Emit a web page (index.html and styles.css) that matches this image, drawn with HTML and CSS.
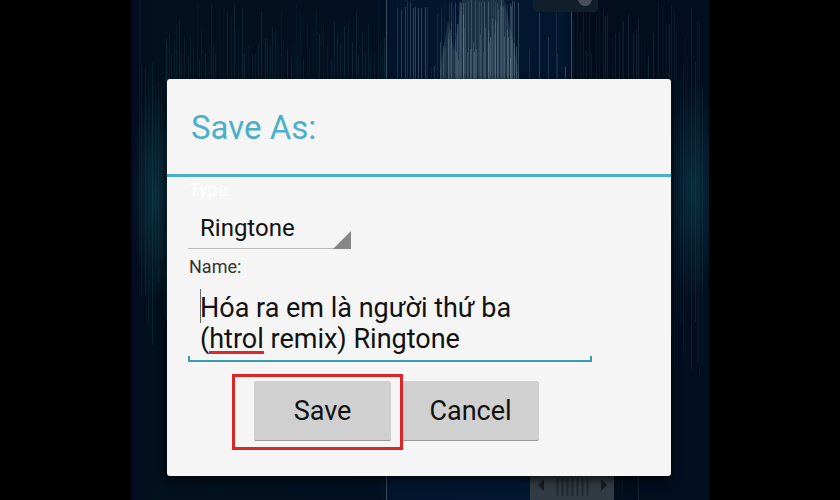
FILE: index.html
```html
<!DOCTYPE html>
<html lang="vi">
<head>
<meta charset="UTF-8">
<meta name="viewport" content="width=device-width, initial-scale=1.0">
<title>Save As</title>
<link rel="stylesheet" href="styles.css">
</head>
<body>
<main class="screen">
  <svg class="waveform" viewBox="0 0 578 500" preserveAspectRatio="none" aria-hidden="true">
    <defs>
      <linearGradient id="base">
        <stop offset="0" stop-color="#020c20"/>
        <stop offset="0.04" stop-color="#03101d"/>
        <stop offset="0.43" stop-color="#031022"/>
        <stop offset="0.45" stop-color="#03152d"/>
        <stop offset="0.75" stop-color="#021630"/>
        <stop offset="0.77" stop-color="#020c1c"/>
        <stop offset="1" stop-color="#020f20"/>
      </linearGradient>
      <radialGradient id="glow">
        <stop offset="0" stop-color="#0b3444" stop-opacity="0.8"/>
        <stop offset="1" stop-color="#0b3444" stop-opacity="0"/>
      </radialGradient>
    </defs>
    <rect width="578" height="500" fill="url(#base)"/>
    <ellipse cx="24" cy="195" rx="24" ry="110" fill="url(#glow)"/>
    <ellipse cx="562" cy="190" rx="28" ry="110" fill="url(#glow)"/>
    <path d="M309 100V70l8-50 6 30 8-50h42l10 45 6 40v15z" fill="#3d5a6a" fill-opacity="0.4"/>
    <g id="bars"></g>
    <path d="M255.500 0V500M440.500 0V500" stroke="#526873" stroke-opacity="0.7"/>
    <path d="M402 0h65v9q0 3-3 3h-59q-3 0-3-3z" fill="#111f2b"/>
    <path d="M447 0h14q-2 6-7 6t-7-6z" fill="#46505a"/>
    <rect x="399" y="476" width="84" height="24" fill="#323a43"/>
    <path d="M413 479v12l-6-6zM470 479v12l6-6z" fill="#171d25"/>
    <path d="M426.500 478v18M431.500 478v18M436.500 478v18M441.500 478v18M446.500 478v18M451.500 478v18M456.500 478v18" stroke="#202832" stroke-width="2"/>
  </svg>

  <form class="dialog">
    <h1 class="title">Save As:</h1>
    <div class="fields">
      <label class="label label-type" for="type">Type:</label>
      <div class="type">
        <select id="type">
          <option>Ringtone</option>
        </select>
      </div>
      <label class="label" for="name">Name:</label>
      <div class="name">
        <textarea id="name" rows="2" spellcheck="false">Hóa ra em là người thứ ba (htrol remix) Ringtone</textarea>
        <span class="caret"></span>
        <span class="misspelled"></span>
      </div>
      <div class="actions">
        <div class="highlight"><button type="button">Save</button></div>
        <button type="button">Cancel</button>
      </div>
    </div>
  </form>
</main>
<script src="script.js"></script>
</body>
</html>
```
FILE: styles.css
```css
* {
  box-sizing: border-box;
}

body {
  margin: 0;
  background: #000;
  color: #111;
  font-family: Roboto, "Liberation Sans", sans-serif;
}

.screen {
  position: relative;
  min-height: 100vh;
  margin: 0 131px;
  padding: 79px 38px 24px 36px;
  overflow: hidden;
}

.waveform {
  position: absolute;
  inset: 0;
  width: 100%;
  height: 100%;
}

.dialog {
  position: relative;
  background: #f5f5f5;
  border-radius: 3px;
  box-shadow: 0 3px 10px rgba(0, 0, 0, 0.8);
}

.title {
  margin: 0;
  padding: 29px 24px 26px;
  border-bottom: 3px solid #4bafca;
  color: #4bafca;
  font-size: 33px;
  font-weight: 400;
  line-height: 40px;
}

.fields {
  display: flex;
  flex-direction: column;
  align-items: flex-start;
  padding: 3px 79px 35px 21px;
}

.label {
  padding-left: 1px;
  color: #333;
  font-size: 18px;
  line-height: 20px;
}

.label-type {
  color: #fff;
}

.type {
  position: relative;
  width: 163px;
  margin: 8px 0;
  border-bottom: 1px solid #bbb;
}

/* corner triangle of the spinner */
.type::after {
  content: "";
  position: absolute;
  right: 0;
  bottom: -1px;
  width: 18px;
  height: 18px;
  background: #868686;
  clip-path: polygon(100% 0, 100% 100%, 0 100%);
  pointer-events: none;
}

select {
  display: block;
  appearance: none;
  width: 100%;
  height: 40px;
  padding: 0 12px;
  border: 0;
  background: none;
  color: #111;
  font: 24px Roboto, "Liberation Sans", sans-serif;
}

.name {
  position: relative;
  width: 100%;
  margin-top: 8px;
  padding-bottom: 5px;
  border-bottom: 2px solid #369eb0;
}

.name::before,
.name::after {
  content: "";
  position: absolute;
  bottom: 0;
  width: 2px;
  height: 4px;
  background: #369eb0;
}

.name::before {
  left: 0;
}

.name::after {
  right: 0;
}

textarea {
  display: block;
  width: 100%;
  height: 70px;
  padding: 8px 12px 0;
  border: 0;
  outline: 0;
  background: none;
  color: #111;
  font: 27px/31px Roboto, "Liberation Sans", sans-serif;
  resize: none;
  overflow: hidden;
}

.caret {
  position: absolute;
  left: 12px;
  top: 4px;
  width: 1px;
  height: 34px;
  background: #666;
}

.misspelled {
  position: absolute;
  left: 21px;
  bottom: 6px;
  width: 55px;
  height: 3px;
  background: #e02828;
}

.actions {
  display: flex;
  gap: 11px;
  margin: 19px 0 0 66px;
}

button {
  width: 137px;
  height: 60px;
  padding: 0;
  border: 0;
  border-bottom: 1px solid #999;
  border-radius: 2px;
  background: #d0d0d0;
  color: #111;
  font: 27px Roboto, "Liberation Sans", sans-serif;
}

.highlight {
  position: relative;
  z-index: 1;
}

.highlight::after {
  content: "";
  position: absolute;
  inset: -7px -12px -9px -22px;
  border: 3px solid #dc2626;
  pointer-events: none;
}
```
FILE: script.js
```js
const bars = document.getElementById('bars');
let seed = 7;

function random() {
  seed = (seed * 16807) % 2147483647;
  return seed / 2147483647;
}

function addBars(from, to, step, color, opacity, top, bottom) {
  for (let x = from; x < to; x += step + Math.floor(random() * 3)) {
    const line = document.createElementNS('http://www.w3.org/2000/svg', 'rect');
    const y = top * random();
    line.setAttribute('x', x);
    line.setAttribute('y', y);
    line.setAttribute('width', 1);
    line.setAttribute('height', bottom - y - random() * 100);
    line.setAttribute('fill', color);
    line.setAttribute('opacity', opacity * (0.3 + random() * 0.7));
    bars.appendChild(line);
  }
}

addBars(8, 36, 2, '#24505f', 0.35, 90, 350);
addBars(36, 255, 2, '#24505f', 0.35, 60, 300);
addBars(266, 300, 2, '#56717f', 0.6, 10, 350);
addBars(300, 318, 3, '#56717f', 0.4, 70, 350);
addBars(309, 388, 1, '#7e99a3', 0.45, 60, 350);
addBars(318, 388, 2, '#7e99a3', 0.4, 4, 350);
addBars(398, 440, 8, '#56717f', 0.6, 80, 350);
addBars(446, 540, 3, '#294854', 0.4, 60, 300);
addBars(540, 574, 2, '#24505f', 0.3, 90, 380);
addBars(425, 510, 15, '#526b83', 0.3, 20, 600);
```
